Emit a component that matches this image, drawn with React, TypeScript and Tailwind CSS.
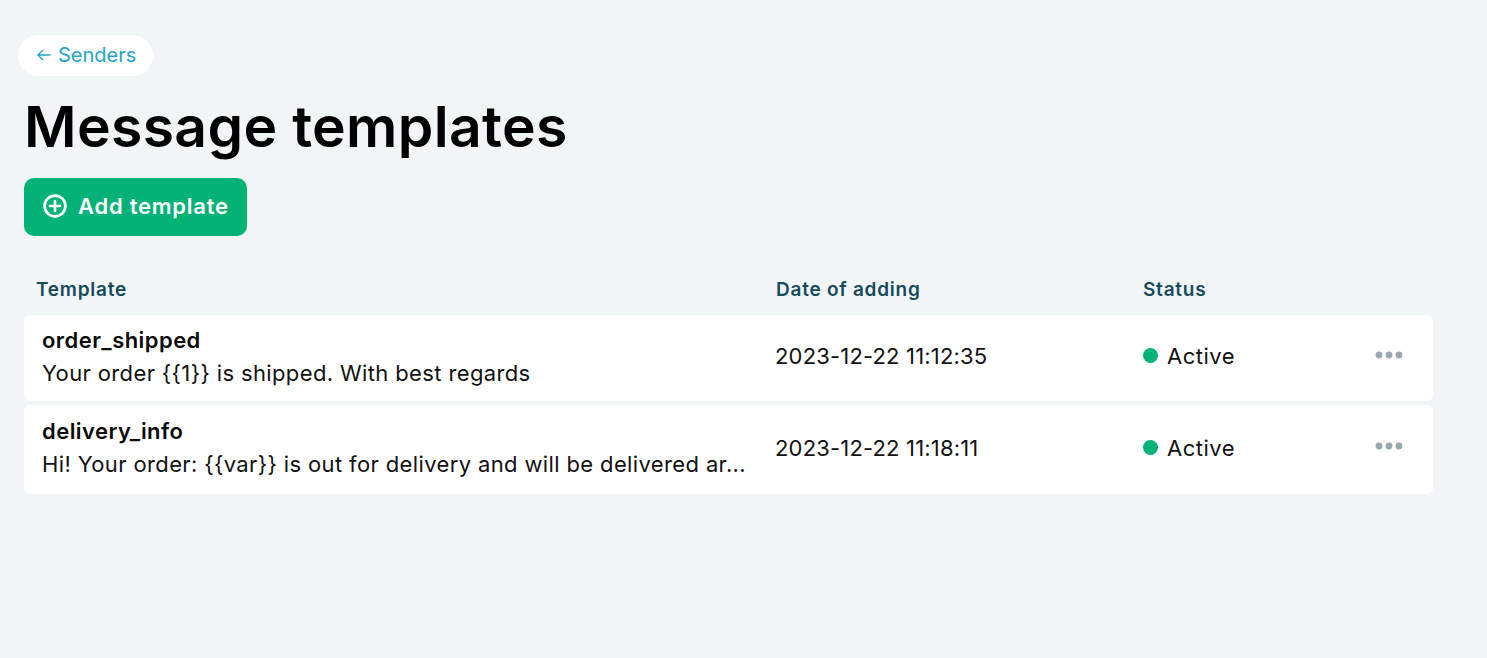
import React from "react";

const rows = [
  { name: "order_shipped", text: "Your order {{1}} is shipped. With best regards", date: "2023-12-22 11:12:35", h: "h-[86px]" },
  { name: "delivery_info", text: "Hi! Your order: {{var}} is out for delivery and will be delivered ar...", date: "2023-12-22 11:18:11", h: "h-[89px]" },
];

function Dots() {
  return (
    <svg width="28" height="8" viewBox="0 0 28 8" className="block -translate-y-0.5">
      <circle cx="4" cy="4" r="3.4" fill="#98a8ab" />
      <circle cx="14" cy="4" r="3.4" fill="#98a8ab" />
      <circle cx="24" cy="4" r="3.4" fill="#98a8ab" />
    </svg>
  );
}

export default function App() {
  return (
    <div className="min-h-[658px] bg-[#f1f5f6] pl-6 pr-[54px] pt-[35px] font-['Inter','Liberation_Sans',sans-serif] text-[#111]">
      <a className="-ml-1.5 flex h-[41px] w-[135px] items-center gap-[7px] rounded-[21px] bg-white pb-0.5 pl-[19px] text-[20px] text-[#22a6c9]">
        <svg width="14" height="12" viewBox="0 0 14 12" fill="none" stroke="#22a6c9" strokeWidth="1.4">
          <path d="M13.5 6H1M6 1 1 6l5 5" />
        </svg>
        <span>Senders</span>
      </a>
      <h1 className="mt-[14px] text-[57px] leading-[74px] font-semibold tracking-[0.35px] text-black">Message templates</h1>
      <button className="mt-[14px] flex h-[58px] w-[223px] items-center gap-[11px] rounded-[10px] bg-[#03b277] pl-[19px] text-[22px] font-semibold tracking-[0.75px] text-white">
        <svg width="24" height="24" viewBox="0 0 24 24" fill="none" stroke="white" strokeWidth="2.7" strokeLinecap="round" className="-translate-y-px">
          <circle cx="12" cy="12" r="10.4" />
          <path d="M12 7v10M7 12h10" />
        </svg>
        <span className="-translate-y-px">Add template</span>
      </button>
      <div className="mt-[41px] flex h-[26px] items-center text-[19px] font-semibold tracking-[0.75px] text-[#174a5b]">
        <div className="w-[752px] pl-3">Template</div>
        <div className="w-[367px]">Date of adding</div>
        <div>Status</div>
      </div>
      <div className="mt-[12px] flex flex-col gap-1">
        {rows.map((r) => (
          <div key={r.name} className={`flex ${r.h} items-center rounded-[6px] bg-white pb-[3px] text-[22px]`}>
            <div className="w-[751px] pl-[18px] leading-[33px]">
              <div className="text-[22px] font-semibold tracking-[0.45px] text-[#0b0b0b]">{r.name}</div>
              <div className="truncate tracking-[0.37px]">{r.text}</div>
            </div>
            <div className="w-[368px] tracking-[0.17px]">{r.date}</div>
            <div className="flex items-center">
              <span className="h-[15px] w-[15px] -translate-y-px rounded-full bg-[#03b277]" />
              <span className="ml-[9px] w-[208px] tracking-[0.5px]">Active</span>
              <Dots />
            </div>
          </div>
        ))}
      </div>
    </div>
  );
}
